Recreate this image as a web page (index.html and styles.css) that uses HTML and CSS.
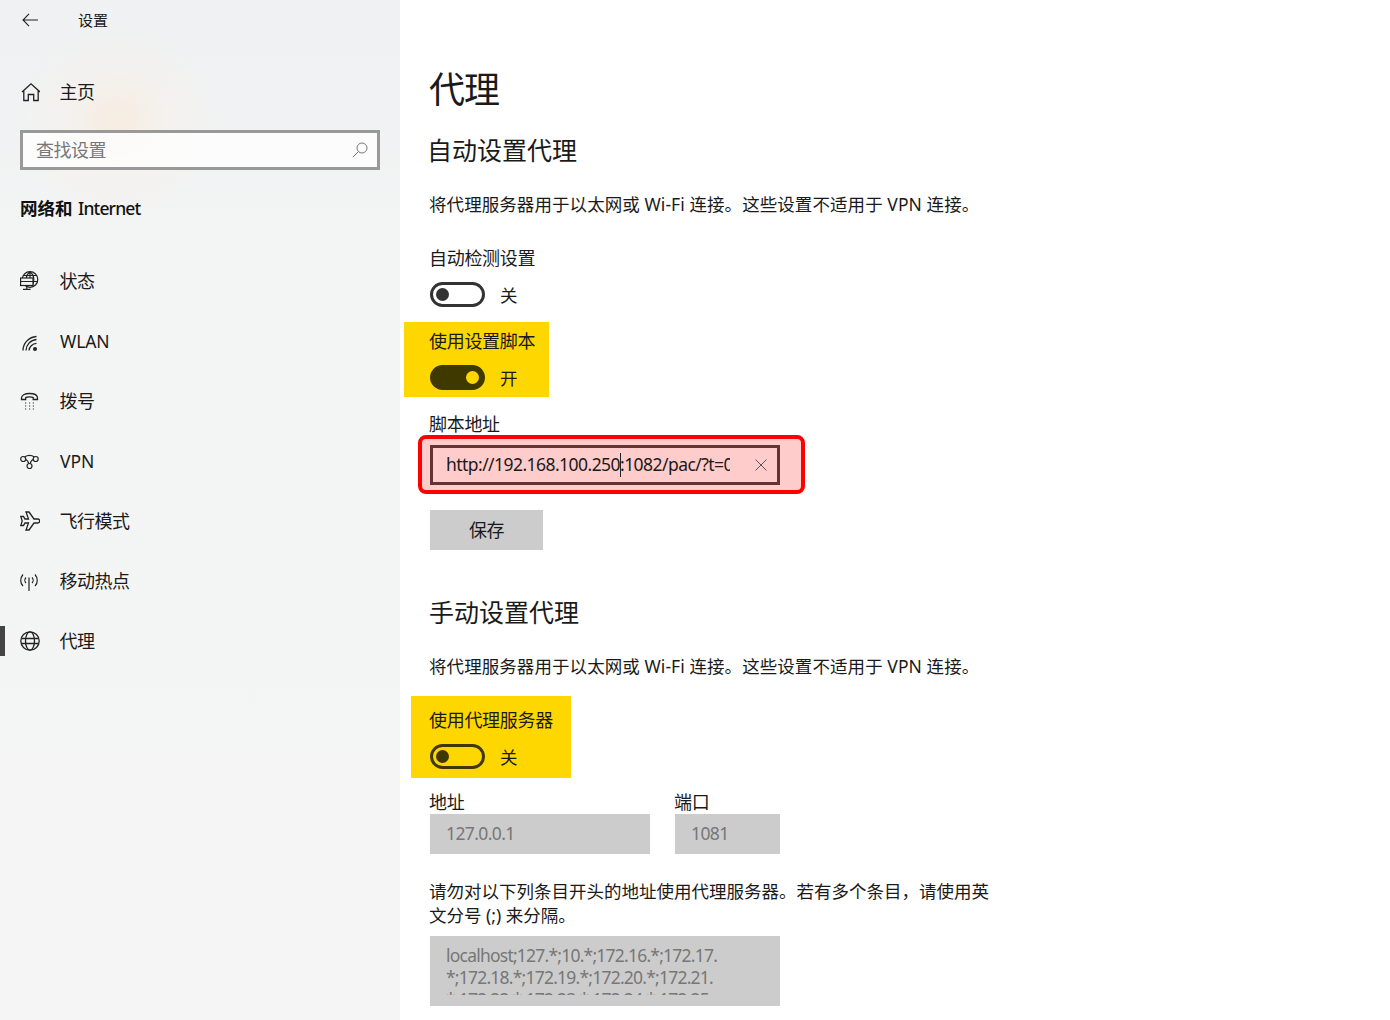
FILE: index.html
```html
<!DOCTYPE html>
<html lang="zh-CN">
<head>
<meta charset="utf-8">
<title>设置</title>
<link rel="stylesheet" href="styles.css">
</head>
<body>
<div class="app">
  <aside class="sidebar">
    <div class="topbar">
      <svg class="back" width="16" height="14" viewBox="0 0 16 14"><path d="M7 .8 1 7l6 6.200M1 7h15" fill="none" stroke="#222" stroke-width="1.100"/></svg>
      <span class="app-title">设置</span>
    </div>
    <div class="home nav-row">
      <svg class="ico" width="20" height="20" viewBox="0 0 20 20"><path d="M2 10 11 1.800 20 10M3.800 8.500V18.500H8.300v-6h5.400v6h4.500V8.500" fill="none" stroke="#222" stroke-width="1.300"/></svg>
      <span>主页</span>
    </div>
    <div class="search">
      <span class="placeholder">查找设置</span>
      <svg width="16" height="16" viewBox="0 0 16 16"><circle cx="10" cy="6" r="5" fill="none" stroke="#777" stroke-width="1"/><path d="M6.500 9.500 .8 15.200" stroke="#777" stroke-width="1"/></svg>
    </div>
    <div class="section-title"><b>网络和</b> <span class="section-latin">Internet</span></div>
    <nav class="nav">
      <div class="nav-row">
        <svg class="ico" width="20" height="20" viewBox="0 0 20 20"><g fill="none" stroke="#222" stroke-width="1.200"><circle cx="10" cy="8.500" r="7.800"/><path d="M10 .7C7 3 6.500 5 6.300 7M10 .7c3 2.300 3.800 5 3.800 7.800 0 2-.5 4-1.500 6M10 .7V7M3.500 4.500h13M13 10.500h4.500"/><rect x=".6" y="7" width="12.400" height="7.500" fill="#f3f4f4"/><path d="M.6 10.500H13M6.800 14.500V18M3 18.400h7.600"/></g></svg>
        <span>状态</span>
      </div>
      <div class="nav-row">
        <svg class="ico" width="20" height="20" viewBox="0 0 20 20"><g fill="none" stroke="#222" stroke-width="1.300"><path d="M3 19.500C3 12 9 6 16.500 5.500M6 19.500C6 14 10.500 9 16.500 8.500M9 19.500c0-3.500 3.500-7 7.500-7.200"/></g><circle cx="15" cy="18" r="2" fill="#222"/></svg>
        <span class="latin">WLAN</span>
      </div>
      <div class="nav-row">
        <svg class="ico" width="20" height="20" viewBox="0 0 20 20"><path d="M1.500 8.500V7C1.500 4.500 4.500 2.500 9.500 2.500s8 2 8 4.500v1.500h-4.300V6.500c-1-.8-6.500-.8-7.500 0v2z" fill="none" stroke="#222" stroke-width="1.300"/><path d="M5 12h1.200M9 12h1.200M12.800 12H14M5 15h1.200M9 15h1.200M12.800 15H14M5 18h1.200M9 18h1.200M12.800 18H14" stroke="#333" stroke-width="1.200"/></svg>
        <span>拨号</span>
      </div>
      <div class="nav-row">
        <svg class="ico" width="20" height="20" viewBox="0 0 20 20"><g fill="none" stroke="#222" stroke-width="1.200"><circle cx="3.200" cy="8" r="2.500"/><circle cx="15.700" cy="8" r="2.500"/><circle cx="9.500" cy="15" r="2.500"/><path d="M5.600 8.500c1.800.5 2.700 2.500 3.200 4.100M13.300 8.500c-1.800.5-2.700 2.500-3.200 4.100M4.500 5.900c3-1.800 7-1.800 10 0"/></g></svg>
        <span class="latin">VPN</span>
      </div>
      <div class="nav-row">
        <svg class="ico" width="20" height="20" viewBox="0 0 20 20"><path d="M6 1h3l5 7h3.500c1.200 0 2.200.9 2.200 2s-1 2-2.200 2H14l-5 7H6l2.500-7H5l-1.500 2.500H.8L2.200 10 .8 5.500h2.700L5 8h3.500z" fill="none" stroke="#222" stroke-width="1.300"/></svg>
        <span>飞行模式</span>
      </div>
      <div class="nav-row">
        <svg class="ico" width="20" height="20" viewBox="0 0 20 20"><g fill="none" stroke="#222" stroke-width="1.200"><path d="M9 6.500V20M3 3.500C0 7 0 12 3 15M15 3.500c3 3.500 3 8.500 0 11.500M6 6.500c-1.500 1.500-1.500 4 0 5.500M12 6.500c1.500 1.500 1.500 4 0 5.500"/></g></svg>
        <span>移动热点</span>
      </div>
      <div class="nav-row active">
        <svg class="ico" width="20" height="20" viewBox="0 0 20 20"><g fill="none" stroke="#222" stroke-width="1.300"><circle cx="10" cy="10" r="9.200"/><ellipse cx="10" cy="10" rx="4.500" ry="9.200"/><path d="M1.500 7.500h17M1.500 12.500h17"/></g></svg>
        <span>代理</span>
      </div>
    </nav>
  </aside>

  <main class="content">
    <h1 class="page-title">代理</h1>
    <h2 class="heading heading-first">自动设置代理</h2>
    <p class="desc">将代理服务器用于以太网或 Wi-Fi 连接。这些设置不适用于 VPN 连接。</p>

    <div class="field-label auto-label">自动检测设置</div>
    <div class="toggle-row">
      <span class="toggle"><i></i></span><span>关</span>
    </div>

    <div class="mark mark-script">
      <div class="field-label">使用设置脚本</div>
      <div class="toggle-row">
        <span class="toggle on"><i></i></span><span>开</span>
      </div>
    </div>

    <div class="field-label script-label">脚本地址</div>
    <div class="red-mark">
      <div class="url-input">
        <span class="url-text">http://192.168.100.250<span class="caret"></span>:1082/pac/?t=0000000</span>
        <svg width="12" height="12" viewBox="0 0 12 12"><path d="M.5.500l11 11M11.500.500l-11 11" stroke="#555" stroke-width="1"/></svg>
      </div>
    </div>
    <div class="save">保存</div>

    <h2 class="heading heading-second">手动设置代理</h2>
    <p class="desc">将代理服务器用于以太网或 Wi-Fi 连接。这些设置不适用于 VPN 连接。</p>

    <div class="mark mark-proxy">
      <div class="field-label">使用代理服务器</div>
      <div class="toggle-row">
        <span class="toggle dark"><i></i></span><span>关</span>
      </div>
    </div>

    <div class="addr-row">
      <div class="addr-col">
        <div class="small-label">地址</div>
        <div class="disabled-input addr-input">127.0.0.1</div>
      </div>
      <div class="addr-col">
        <div class="small-label">端口</div>
        <div class="disabled-input port-input">1081</div>
      </div>
    </div>

    <p class="exclude">请勿对以下列条目开头的地址使用代理服务器。若有多个条目，请使用英文分号 (;) 来分隔。</p>
    <div class="textarea"><div class="textarea-clip">localhost;127.*;10.*;172.16.*;172.17.<br>*;172.18.*;172.19.*;172.20.*;172.21.<br>*;172.22.*;172.23.*;172.24.*;172.25.</div></div>
  </main>
</div>
</body>
</html>
```
FILE: styles.css
```css
* { box-sizing: border-box; }
html, body { margin: 0; height: 100%; overflow: hidden; background: #fff; }
body {
  font-family: "Noto Sans", "Noto Sans CJK SC", sans-serif;
  font-size: 17.500px;
  line-height: 24px;
  color: #1a1a1a;
}
.app { display: flex; height: 1020px; }
.sidebar {
  width: 400px;
  flex: none;
  background:
    radial-gradient(circle at 118px 122px, rgba(255, 228, 198, .42) 0, rgba(255, 238, 220, .2) 50px, rgba(245, 245, 245, 0) 100px),
    linear-gradient(180deg, #eff1f2 0, #f3f4f4 250px, #f5f5f5 100%);
}
.topbar { display: flex; align-items: center; height: 40px; padding-left: 22px; }
.app-title { margin-left: 40px; font-size: 15px; }
.nav-row { position: relative; display: flex; align-items: center; height: 60px; padding-left: 20px; }
.nav-row span { margin-left: 19.500px; font-size: 18px; letter-spacing: -.5px; }
.nav-row .latin { margin-left: 20px; font-size: 17.500px; letter-spacing: -.1px; }
.ico { flex: none; }
.home { height: 40px; margin-top: 32px; }
.search {
  display: flex;
  align-items: center;
  justify-content: space-between;
  width: 360px;
  height: 40px;
  margin: 18px 0 0 20px;
  padding: 0 9px 0 13px;
  border: 3px solid #999;
  background: rgba(255, 255, 255, .75);
}
.placeholder { color: #777; font-size: 18px; letter-spacing: -.5px; }
.section-title { margin: 26px 0 0 20px; height: 24px; font-weight: 400; color: #111; }
.section-title b { font-weight: 700; }
.section-latin { margin-left: 1px; font-weight: 500; letter-spacing: -.85px; }
.nav { margin-top: 31px; }
.active::before { content: ""; position: absolute; left: 0; top: 15px; width: 5px; height: 30px; background: #444; }

.content { flex: 1; padding: 0 0 0 30px; min-width: 0; }
.page-title { margin: 0 0 0 -1px; padding-top: 66px; height: 125px; font-size: 36px; line-height: 48px; font-weight: 400; letter-spacing: -1px; }
.heading { margin: 0 0 0 -1px; font-size: 25px; line-height: 36px; font-weight: 400; }
.heading-first { margin-left: -3px; margin-top: 7px; }
.heading-second { margin-top: 44px; }
.desc { margin: 24px 0 0 -1px; width: 640px; letter-spacing: .07px; }
.auto-label { margin-top: 30px; }
.field-label { height: 24px; margin-left: -1px; padding-top: 1px; line-height: 23px; font-size: 18px; letter-spacing: -.3px; }
.toggle-row { display: flex; align-items: center; height: 25px; margin-top: 12px; }
.toggle {
  position: relative;
  display: block;
  width: 55px;
  height: 25px;
  margin-right: 15px;
  border: 3px solid #333;
  border-radius: 13px;
}
.toggle i { position: absolute; left: 3px; top: 3px; width: 13px; height: 13px; border-radius: 50%; background: #333; }
.toggle.on { background: #3f3900; border-color: #3f3900; }
.toggle.on i { left: auto; right: 3px; background: #ffd700; }
.toggle.dark { border-color: #3f3900; }
.toggle.dark i { background: #3f3900; }
.mark { background: #ffd700; }
.mark-script { width: 145px; height: 75px; margin: 15px 0 0 -26px; padding: 7px 0 0 26px; }
.script-label { margin-top: 15px; }
.red-mark {
  width: 387px;
  height: 59px;
  margin: -1px 0 0 -12px;
  padding: 6px 0 0 8px;
  border: 4px solid #f00;
  border-radius: 8px;
  background: #ffcccc;
}
.url-input {
  display: flex;
  align-items: center;
  justify-content: space-between;
  width: 350px;
  height: 40px;
  padding: 0 10px 0 13px;
  border: 3px solid #663333;
}
.url-text { width: 284px; margin-top: -2px; overflow: hidden; white-space: nowrap; letter-spacing: -.55px; }
.caret { display: inline-block; width: 1px; height: 24px; margin-right: -1px; background: #222; vertical-align: -6px; }
.save { display: flex; align-items: center; justify-content: center; width: 113px; height: 40px; margin-top: 16px; background: #ccc; font-size: 18px; letter-spacing: -.5px; }
.mark-proxy { width: 160px; height: 82px; margin: 18px 0 0 -19px; padding: 12px 0 0 19px; }
.addr-row { display: flex; gap: 25px; margin-top: 12px; }
.small-label { height: 24px; margin-left: -1px; padding-top: 1px; line-height: 23px; font-size: 18px; letter-spacing: -.3px; }
.disabled-input { height: 40px; padding: 0 16px; line-height: 38px; background: #ccc; color: #777; font-size: 17.500px; letter-spacing: -.6px; }
.addr-input { width: 220px; }
.port-input { width: 105px; }
.exclude { width: 565px; margin: 25px 0 0 -1px; }
.textarea { width: 350px; height: 70px; margin-top: 9px; padding: 8px 16px 0; background: #ccc; color: #777; line-height: 22px; letter-spacing: -.78px; }
.textarea-clip { height: 51px; overflow: hidden; white-space: nowrap; }
```
